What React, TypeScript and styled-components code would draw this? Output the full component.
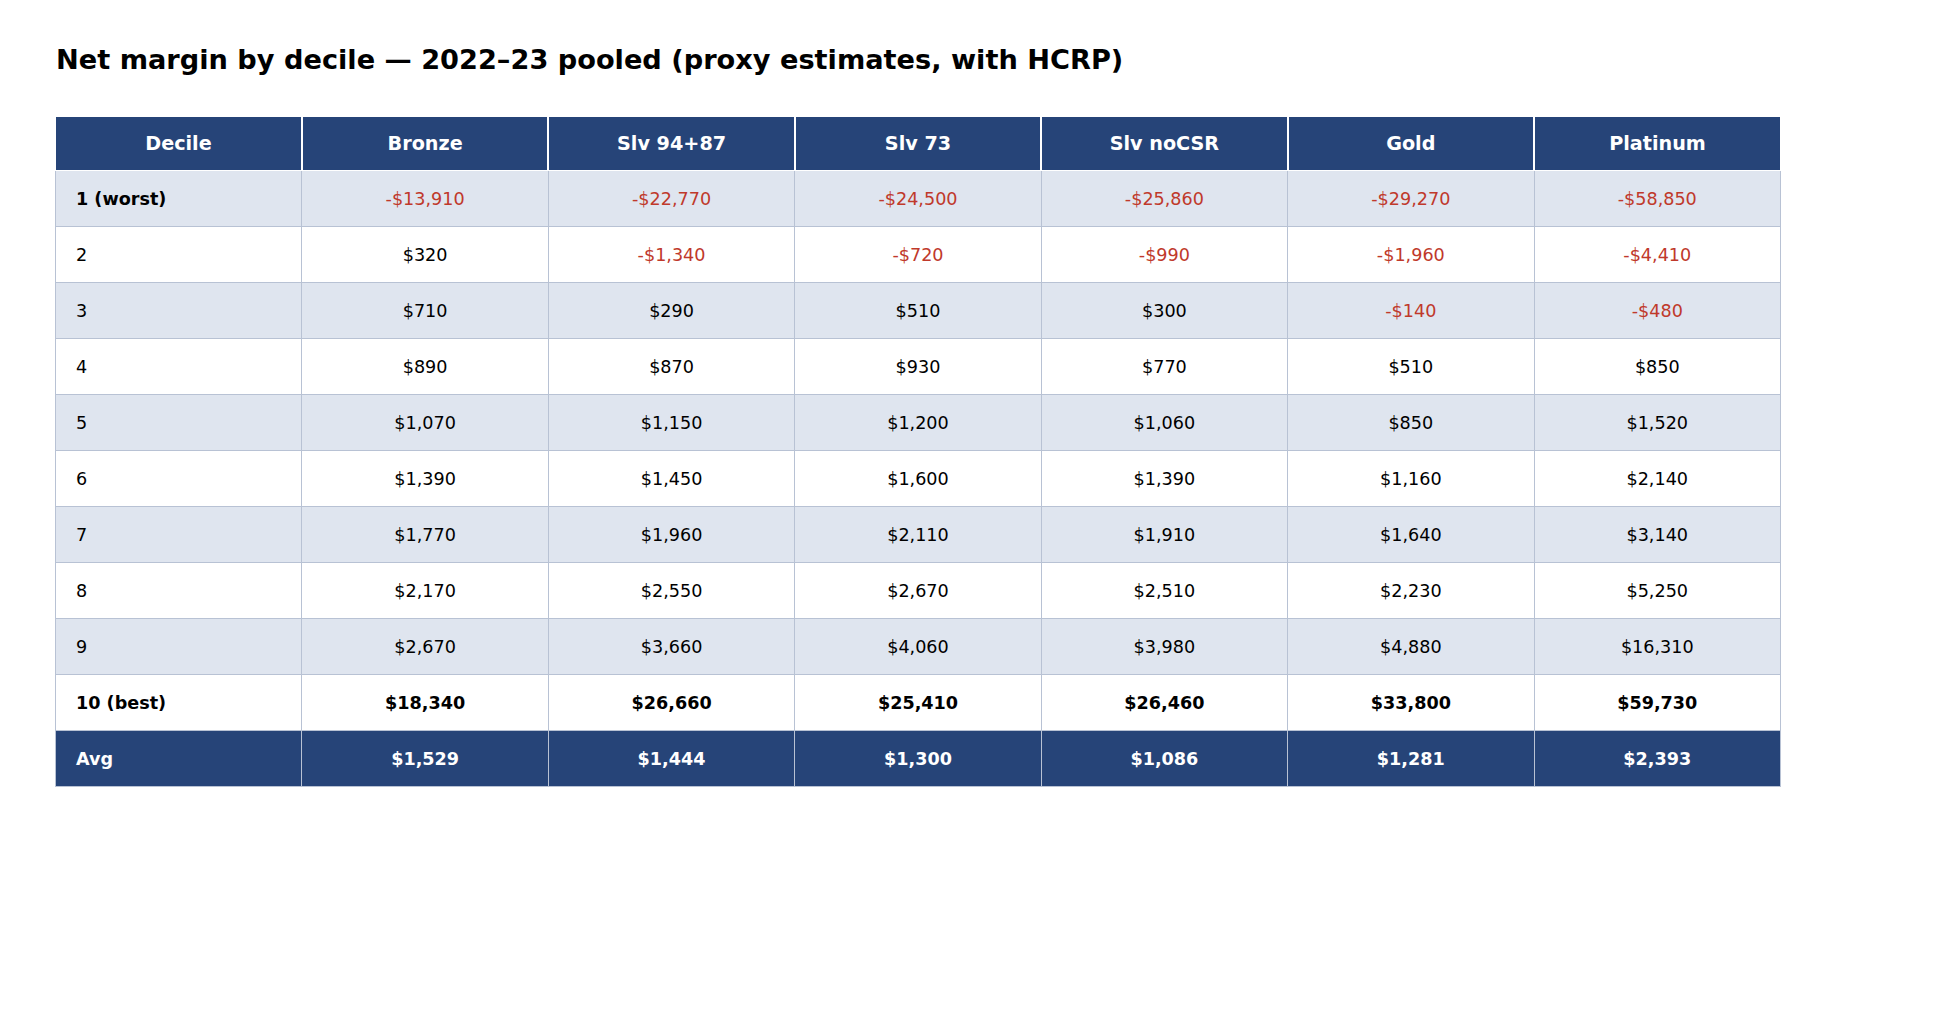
import styled, { createGlobalStyle } from 'styled-components';

const GlobalStyle = createGlobalStyle`
  body {
    margin: 0;
    background: #ffffff;
    font-family: 'DejaVu Sans', Verdana, sans-serif;
    color: #000000;
  }
`;

const columns = ['Decile', 'Bronze', 'Slv 94+87', 'Slv 73', 'Slv noCSR', 'Gold', 'Platinum'];

type RowKind = 'worst' | 'plain' | 'best' | 'avg';

interface DecileRow {
  label: string;
  values: string[];
  kind: RowKind;
}

const rows: DecileRow[] = [
  { label: '1 (worst)', values: ['-$13,910', '-$22,770', '-$24,500', '-$25,860', '-$29,270', '-$58,850'], kind: 'worst' },
  { label: '2', values: ['$320', '-$1,340', '-$720', '-$990', '-$1,960', '-$4,410'], kind: 'plain' },
  { label: '3', values: ['$710', '$290', '$510', '$300', '-$140', '-$480'], kind: 'plain' },
  { label: '4', values: ['$890', '$870', '$930', '$770', '$510', '$850'], kind: 'plain' },
  { label: '5', values: ['$1,070', '$1,150', '$1,200', '$1,060', '$850', '$1,520'], kind: 'plain' },
  { label: '6', values: ['$1,390', '$1,450', '$1,600', '$1,390', '$1,160', '$2,140'], kind: 'plain' },
  { label: '7', values: ['$1,770', '$1,960', '$2,110', '$1,910', '$1,640', '$3,140'], kind: 'plain' },
  { label: '8', values: ['$2,170', '$2,550', '$2,670', '$2,510', '$2,230', '$5,250'], kind: 'plain' },
  { label: '9', values: ['$2,670', '$3,660', '$4,060', '$3,980', '$4,880', '$16,310'], kind: 'plain' },
  { label: '10 (best)', values: ['$18,340', '$26,660', '$25,410', '$26,460', '$33,800', '$59,730'], kind: 'best' },
  { label: 'Avg', values: ['$1,529', '$1,444', '$1,300', '$1,086', '$1,281', '$2,393'], kind: 'avg' },
];

export default function App() {
  return (
    <Page>
      <GlobalStyle />
      <Title>Net margin by decile — 2022–23 pooled (proxy estimates, with HCRP)</Title>
      <Table>
        <thead>
          <tr>
            {columns.map((c) => (
              <HeadCell key={c}>{c}</HeadCell>
            ))}
          </tr>
        </thead>
        <tbody>
          {rows.map((row, i) => {
            // worst row keeps regular values, only its label is bold
            const boldValues = row.kind === 'best' || row.kind === 'avg';
            return (
              <BodyRow key={row.label} $kind={row.kind} $striped={i % 2 === 0}>
                <LabelCell $bold={row.kind !== 'plain'}>{row.label}</LabelCell>
                {row.values.map((v, j) => (
                  <ValueCell key={j} $bold={boldValues} $negative={!boldValues && v.startsWith('-')}>
                    {v}
                  </ValueCell>
                ))}
              </BodyRow>
            );
          })}
        </tbody>
      </Table>
    </Page>
  );
}

const Page = styled.div`
  padding: 40px 55px;
`;

const Title = styled.h1`
  margin: 0 0 36px 1px;
  font-size: 27.2px;
  font-weight: 700;
  line-height: 40px;
`;

const Table = styled.table`
  width: 1726px;
  table-layout: fixed;
  border-collapse: collapse;
  font-size: 17.6px;
`;

const HeadCell = styled.th`
  height: 53px;
  padding: 0 8px;
  background: #264478;
  color: #ffffff;
  font-size: 19.2px;
  font-weight: 700;
  text-align: center;
  border: 1px solid #ffffff;
  border-left-width: 2px;
  border-right-width: 2px;
  &:first-child {
    border-left-width: 1px;
  }
  &:last-child {
    border-right-width: 1px;
  }
`;

const BodyRow = styled.tr<{ $kind: RowKind; $striped: boolean }>`
  height: 56px;
  background: ${({ $kind, $striped }) => ($kind === 'avg' ? '#264478' : $striped ? '#dfe5ef' : '#ffffff')};
  color: ${({ $kind }) => ($kind === 'avg' ? '#ffffff' : '#000000')};
`;

const LabelCell = styled.td<{ $bold: boolean }>`
  padding: 0 20px;
  border: 1px solid #b8c2d4;
  text-align: left;
  font-weight: ${({ $bold }) => ($bold ? 700 : 400)};
`;

const ValueCell = styled.td<{ $bold: boolean; $negative: boolean }>`
  padding: 0 8px;
  border: 1px solid #b8c2d4;
  text-align: center;
  font-weight: ${({ $bold }) => ($bold ? 700 : 400)};
  color: ${({ $negative }) => ($negative ? '#c0392b' : 'inherit')};
`;
